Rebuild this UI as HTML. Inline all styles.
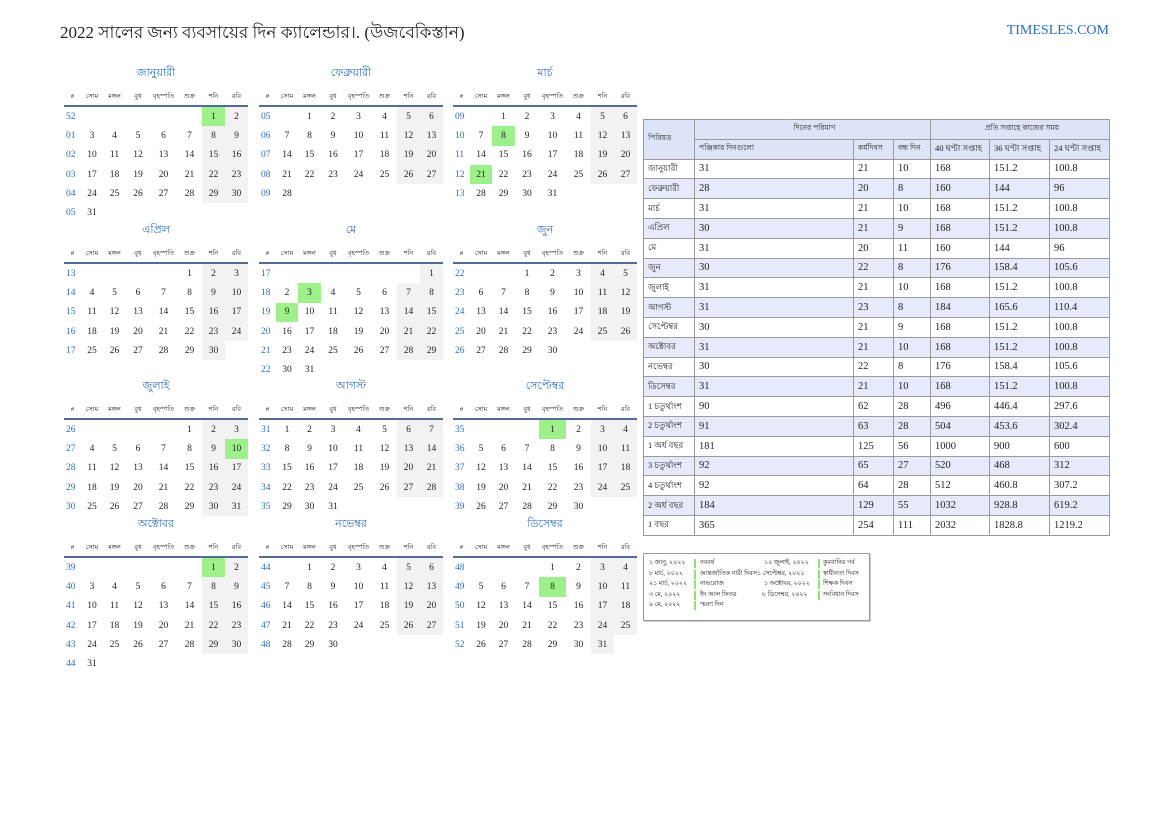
<!DOCTYPE html>
<html><head><meta charset="utf-8"><style>
body{margin:0;width:1169px;height:827px;background:#fff;position:relative;font-family:"Liberation Serif","DejaVu Serif",serif;color:#222;overflow:hidden}
.t{position:absolute;left:60px;top:20px;font-size:17px;white-space:nowrap}
.site{position:absolute;right:60px;top:23px;font-size:14px;color:#2a6ebb}
.m{position:absolute;width:184px}
.m h3{margin:0;height:22px;font-size:11px;font-weight:normal;color:#2a6ebb;text-align:center;line-height:16px}
table.c{border-collapse:collapse;width:184px;table-layout:fixed}
table.c th{font-size:6.5px;font-weight:normal;height:18px;border-bottom:2px solid #4f6d96;padding:0;text-align:center;white-space:nowrap;overflow:hidden}
table.c td{height:19.3px;padding:0;text-align:center;font-size:9.5px}
table.c td.w{color:#2a6ebb;text-align:left;padding-left:2px}
td.s{background:#f2f2f2}
td.g{background:#9ef08a}
table.r{position:absolute;left:643px;top:119px;border-collapse:collapse;table-layout:fixed;width:467px;font-size:10.5px}
table.r td{border:1px solid #9a9a9a;height:18.8px;padding:0 0 0 4px;white-space:nowrap;overflow:hidden}
table.r .h td{background:#dde4f7;font-size:7.5px;height:18.8px}
table.r .h td.cc{text-align:center}
table.r tr.b td{background:#e6eafa}
table.r td.p{font-size:8.5px}
.lg{position:absolute;left:643px;top:553px;width:225px;height:66px;border:1px solid #9a9a9a;box-shadow:1px 1px 0 #ccc;font-size:6.3px}
.lg div{position:absolute;white-space:nowrap;height:10px;line-height:10px}
.bar{position:absolute;width:2px;height:9px;background:#8fe07a}
</style></head><body>
<div class="t">2022 সালের জন্য ব্যবসায়ের দিন ক্যালেন্ডার।. (উজবেকিস্তান)</div>
<div class="site">TIMESLES.COM</div>

<div class="m" style="left:64px;top:65px"><h3>জানুয়ারী</h3><table class="c"><colgroup><col style="width:17px"><col style="width:22px"><col style="width:23px"><col style="width:24px"><col style="width:27px"><col style="width:25px"><col style="width:23px"><col style="width:23px"></colgroup>
<tr><th>#</th><th>সোম</th><th>মঙ্গল</th><th>বুধ</th><th>বৃহস্পতি</th><th>শুক্র</th><th>শনি</th><th>রবি</th></tr>
<tr><td class=w>52</td><td></td><td></td><td></td><td></td><td></td><td class=g>1</td><td class=s>2</td></tr>
<tr><td class=w>01</td><td>3</td><td>4</td><td>5</td><td>6</td><td>7</td><td class=s>8</td><td class=s>9</td></tr>
<tr><td class=w>02</td><td>10</td><td>11</td><td>12</td><td>13</td><td>14</td><td class=s>15</td><td class=s>16</td></tr>
<tr><td class=w>03</td><td>17</td><td>18</td><td>19</td><td>20</td><td>21</td><td class=s>22</td><td class=s>23</td></tr>
<tr><td class=w>04</td><td>24</td><td>25</td><td>26</td><td>27</td><td>28</td><td class=s>29</td><td class=s>30</td></tr>
<tr><td class=w>05</td><td>31</td><td></td><td></td><td></td><td></td><td></td><td></td></tr>
</table></div>

<div class="m" style="left:259px;top:65px"><h3>ফেব্রুয়ারী</h3><table class="c"><colgroup><col style="width:17px"><col style="width:22px"><col style="width:23px"><col style="width:24px"><col style="width:27px"><col style="width:25px"><col style="width:23px"><col style="width:23px"></colgroup>
<tr><th>#</th><th>সোম</th><th>মঙ্গল</th><th>বুধ</th><th>বৃহস্পতি</th><th>শুক্র</th><th>শনি</th><th>রবি</th></tr>
<tr><td class=w>05</td><td></td><td>1</td><td>2</td><td>3</td><td>4</td><td class=s>5</td><td class=s>6</td></tr>
<tr><td class=w>06</td><td>7</td><td>8</td><td>9</td><td>10</td><td>11</td><td class=s>12</td><td class=s>13</td></tr>
<tr><td class=w>07</td><td>14</td><td>15</td><td>16</td><td>17</td><td>18</td><td class=s>19</td><td class=s>20</td></tr>
<tr><td class=w>08</td><td>21</td><td>22</td><td>23</td><td>24</td><td>25</td><td class=s>26</td><td class=s>27</td></tr>
<tr><td class=w>09</td><td>28</td><td></td><td></td><td></td><td></td><td></td><td></td></tr>
</table></div>

<div class="m" style="left:453px;top:65px"><h3>মার্চ</h3><table class="c"><colgroup><col style="width:17px"><col style="width:22px"><col style="width:23px"><col style="width:24px"><col style="width:27px"><col style="width:25px"><col style="width:23px"><col style="width:23px"></colgroup>
<tr><th>#</th><th>সোম</th><th>মঙ্গল</th><th>বুধ</th><th>বৃহস্পতি</th><th>শুক্র</th><th>শনি</th><th>রবি</th></tr>
<tr><td class=w>09</td><td></td><td>1</td><td>2</td><td>3</td><td>4</td><td class=s>5</td><td class=s>6</td></tr>
<tr><td class=w>10</td><td>7</td><td class=g>8</td><td>9</td><td>10</td><td>11</td><td class=s>12</td><td class=s>13</td></tr>
<tr><td class=w>11</td><td>14</td><td>15</td><td>16</td><td>17</td><td>18</td><td class=s>19</td><td class=s>20</td></tr>
<tr><td class=w>12</td><td class=g>21</td><td>22</td><td>23</td><td>24</td><td>25</td><td class=s>26</td><td class=s>27</td></tr>
<tr><td class=w>13</td><td>28</td><td>29</td><td>30</td><td>31</td><td></td><td></td><td></td></tr>
</table></div>

<div class="m" style="left:64px;top:222px"><h3>এপ্রিল</h3><table class="c"><colgroup><col style="width:17px"><col style="width:22px"><col style="width:23px"><col style="width:24px"><col style="width:27px"><col style="width:25px"><col style="width:23px"><col style="width:23px"></colgroup>
<tr><th>#</th><th>সোম</th><th>মঙ্গল</th><th>বুধ</th><th>বৃহস্পতি</th><th>শুক্র</th><th>শনি</th><th>রবি</th></tr>
<tr><td class=w>13</td><td></td><td></td><td></td><td></td><td>1</td><td class=s>2</td><td class=s>3</td></tr>
<tr><td class=w>14</td><td>4</td><td>5</td><td>6</td><td>7</td><td>8</td><td class=s>9</td><td class=s>10</td></tr>
<tr><td class=w>15</td><td>11</td><td>12</td><td>13</td><td>14</td><td>15</td><td class=s>16</td><td class=s>17</td></tr>
<tr><td class=w>16</td><td>18</td><td>19</td><td>20</td><td>21</td><td>22</td><td class=s>23</td><td class=s>24</td></tr>
<tr><td class=w>17</td><td>25</td><td>26</td><td>27</td><td>28</td><td>29</td><td class=s>30</td><td></td></tr>
</table></div>

<div class="m" style="left:259px;top:222px"><h3>মে</h3><table class="c"><colgroup><col style="width:17px"><col style="width:22px"><col style="width:23px"><col style="width:24px"><col style="width:27px"><col style="width:25px"><col style="width:23px"><col style="width:23px"></colgroup>
<tr><th>#</th><th>সোম</th><th>মঙ্গল</th><th>বুধ</th><th>বৃহস্পতি</th><th>শুক্র</th><th>শনি</th><th>রবি</th></tr>
<tr><td class=w>17</td><td></td><td></td><td></td><td></td><td></td><td></td><td class=s>1</td></tr>
<tr><td class=w>18</td><td>2</td><td class=g>3</td><td>4</td><td>5</td><td>6</td><td class=s>7</td><td class=s>8</td></tr>
<tr><td class=w>19</td><td class=g>9</td><td>10</td><td>11</td><td>12</td><td>13</td><td class=s>14</td><td class=s>15</td></tr>
<tr><td class=w>20</td><td>16</td><td>17</td><td>18</td><td>19</td><td>20</td><td class=s>21</td><td class=s>22</td></tr>
<tr><td class=w>21</td><td>23</td><td>24</td><td>25</td><td>26</td><td>27</td><td class=s>28</td><td class=s>29</td></tr>
<tr><td class=w>22</td><td>30</td><td>31</td><td></td><td></td><td></td><td></td><td></td></tr>
</table></div>

<div class="m" style="left:453px;top:222px"><h3>জুন</h3><table class="c"><colgroup><col style="width:17px"><col style="width:22px"><col style="width:23px"><col style="width:24px"><col style="width:27px"><col style="width:25px"><col style="width:23px"><col style="width:23px"></colgroup>
<tr><th>#</th><th>সোম</th><th>মঙ্গল</th><th>বুধ</th><th>বৃহস্পতি</th><th>শুক্র</th><th>শনি</th><th>রবি</th></tr>
<tr><td class=w>22</td><td></td><td></td><td>1</td><td>2</td><td>3</td><td class=s>4</td><td class=s>5</td></tr>
<tr><td class=w>23</td><td>6</td><td>7</td><td>8</td><td>9</td><td>10</td><td class=s>11</td><td class=s>12</td></tr>
<tr><td class=w>24</td><td>13</td><td>14</td><td>15</td><td>16</td><td>17</td><td class=s>18</td><td class=s>19</td></tr>
<tr><td class=w>25</td><td>20</td><td>21</td><td>22</td><td>23</td><td>24</td><td class=s>25</td><td class=s>26</td></tr>
<tr><td class=w>26</td><td>27</td><td>28</td><td>29</td><td>30</td><td></td><td></td><td></td></tr>
</table></div>

<div class="m" style="left:64px;top:378px"><h3>জুলাই</h3><table class="c"><colgroup><col style="width:17px"><col style="width:22px"><col style="width:23px"><col style="width:24px"><col style="width:27px"><col style="width:25px"><col style="width:23px"><col style="width:23px"></colgroup>
<tr><th>#</th><th>সোম</th><th>মঙ্গল</th><th>বুধ</th><th>বৃহস্পতি</th><th>শুক্র</th><th>শনি</th><th>রবি</th></tr>
<tr><td class=w>26</td><td></td><td></td><td></td><td></td><td>1</td><td class=s>2</td><td class=s>3</td></tr>
<tr><td class=w>27</td><td>4</td><td>5</td><td>6</td><td>7</td><td>8</td><td class=s>9</td><td class=g>10</td></tr>
<tr><td class=w>28</td><td>11</td><td>12</td><td>13</td><td>14</td><td>15</td><td class=s>16</td><td class=s>17</td></tr>
<tr><td class=w>29</td><td>18</td><td>19</td><td>20</td><td>21</td><td>22</td><td class=s>23</td><td class=s>24</td></tr>
<tr><td class=w>30</td><td>25</td><td>26</td><td>27</td><td>28</td><td>29</td><td class=s>30</td><td class=s>31</td></tr>
</table></div>

<div class="m" style="left:259px;top:378px"><h3>আগস্ট</h3><table class="c"><colgroup><col style="width:17px"><col style="width:22px"><col style="width:23px"><col style="width:24px"><col style="width:27px"><col style="width:25px"><col style="width:23px"><col style="width:23px"></colgroup>
<tr><th>#</th><th>সোম</th><th>মঙ্গল</th><th>বুধ</th><th>বৃহস্পতি</th><th>শুক্র</th><th>শনি</th><th>রবি</th></tr>
<tr><td class=w>31</td><td>1</td><td>2</td><td>3</td><td>4</td><td>5</td><td class=s>6</td><td class=s>7</td></tr>
<tr><td class=w>32</td><td>8</td><td>9</td><td>10</td><td>11</td><td>12</td><td class=s>13</td><td class=s>14</td></tr>
<tr><td class=w>33</td><td>15</td><td>16</td><td>17</td><td>18</td><td>19</td><td class=s>20</td><td class=s>21</td></tr>
<tr><td class=w>34</td><td>22</td><td>23</td><td>24</td><td>25</td><td>26</td><td class=s>27</td><td class=s>28</td></tr>
<tr><td class=w>35</td><td>29</td><td>30</td><td>31</td><td></td><td></td><td></td><td></td></tr>
</table></div>

<div class="m" style="left:453px;top:378px"><h3>সেপ্টেম্বর</h3><table class="c"><colgroup><col style="width:17px"><col style="width:22px"><col style="width:23px"><col style="width:24px"><col style="width:27px"><col style="width:25px"><col style="width:23px"><col style="width:23px"></colgroup>
<tr><th>#</th><th>সোম</th><th>মঙ্গল</th><th>বুধ</th><th>বৃহস্পতি</th><th>শুক্র</th><th>শনি</th><th>রবি</th></tr>
<tr><td class=w>35</td><td></td><td></td><td></td><td class=g>1</td><td>2</td><td class=s>3</td><td class=s>4</td></tr>
<tr><td class=w>36</td><td>5</td><td>6</td><td>7</td><td>8</td><td>9</td><td class=s>10</td><td class=s>11</td></tr>
<tr><td class=w>37</td><td>12</td><td>13</td><td>14</td><td>15</td><td>16</td><td class=s>17</td><td class=s>18</td></tr>
<tr><td class=w>38</td><td>19</td><td>20</td><td>21</td><td>22</td><td>23</td><td class=s>24</td><td class=s>25</td></tr>
<tr><td class=w>39</td><td>26</td><td>27</td><td>28</td><td>29</td><td>30</td><td></td><td></td></tr>
</table></div>

<div class="m" style="left:64px;top:516px"><h3>অক্টোবর</h3><table class="c"><colgroup><col style="width:17px"><col style="width:22px"><col style="width:23px"><col style="width:24px"><col style="width:27px"><col style="width:25px"><col style="width:23px"><col style="width:23px"></colgroup>
<tr><th>#</th><th>সোম</th><th>মঙ্গল</th><th>বুধ</th><th>বৃহস্পতি</th><th>শুক্র</th><th>শনি</th><th>রবি</th></tr>
<tr><td class=w>39</td><td></td><td></td><td></td><td></td><td></td><td class=g>1</td><td class=s>2</td></tr>
<tr><td class=w>40</td><td>3</td><td>4</td><td>5</td><td>6</td><td>7</td><td class=s>8</td><td class=s>9</td></tr>
<tr><td class=w>41</td><td>10</td><td>11</td><td>12</td><td>13</td><td>14</td><td class=s>15</td><td class=s>16</td></tr>
<tr><td class=w>42</td><td>17</td><td>18</td><td>19</td><td>20</td><td>21</td><td class=s>22</td><td class=s>23</td></tr>
<tr><td class=w>43</td><td>24</td><td>25</td><td>26</td><td>27</td><td>28</td><td class=s>29</td><td class=s>30</td></tr>
<tr><td class=w>44</td><td>31</td><td></td><td></td><td></td><td></td><td></td><td></td></tr>
</table></div>

<div class="m" style="left:259px;top:516px"><h3>নভেম্বর</h3><table class="c"><colgroup><col style="width:17px"><col style="width:22px"><col style="width:23px"><col style="width:24px"><col style="width:27px"><col style="width:25px"><col style="width:23px"><col style="width:23px"></colgroup>
<tr><th>#</th><th>সোম</th><th>মঙ্গল</th><th>বুধ</th><th>বৃহস্পতি</th><th>শুক্র</th><th>শনি</th><th>রবি</th></tr>
<tr><td class=w>44</td><td></td><td>1</td><td>2</td><td>3</td><td>4</td><td class=s>5</td><td class=s>6</td></tr>
<tr><td class=w>45</td><td>7</td><td>8</td><td>9</td><td>10</td><td>11</td><td class=s>12</td><td class=s>13</td></tr>
<tr><td class=w>46</td><td>14</td><td>15</td><td>16</td><td>17</td><td>18</td><td class=s>19</td><td class=s>20</td></tr>
<tr><td class=w>47</td><td>21</td><td>22</td><td>23</td><td>24</td><td>25</td><td class=s>26</td><td class=s>27</td></tr>
<tr><td class=w>48</td><td>28</td><td>29</td><td>30</td><td></td><td></td><td></td><td></td></tr>
</table></div>

<div class="m" style="left:453px;top:516px"><h3>ডিসেম্বর</h3><table class="c"><colgroup><col style="width:17px"><col style="width:22px"><col style="width:23px"><col style="width:24px"><col style="width:27px"><col style="width:25px"><col style="width:23px"><col style="width:23px"></colgroup>
<tr><th>#</th><th>সোম</th><th>মঙ্গল</th><th>বুধ</th><th>বৃহস্পতি</th><th>শুক্র</th><th>শনি</th><th>রবি</th></tr>
<tr><td class=w>48</td><td></td><td></td><td></td><td>1</td><td>2</td><td class=s>3</td><td class=s>4</td></tr>
<tr><td class=w>49</td><td>5</td><td>6</td><td>7</td><td class=g>8</td><td>9</td><td class=s>10</td><td class=s>11</td></tr>
<tr><td class=w>50</td><td>12</td><td>13</td><td>14</td><td>15</td><td>16</td><td class=s>17</td><td class=s>18</td></tr>
<tr><td class=w>51</td><td>19</td><td>20</td><td>21</td><td>22</td><td>23</td><td class=s>24</td><td class=s>25</td></tr>
<tr><td class=w>52</td><td>26</td><td>27</td><td>28</td><td>29</td><td>30</td><td class=s>31</td><td></td></tr>
</table></div>

<table class="r">
<colgroup><col style="width:51px"><col style="width:159px"><col style="width:40px"><col style="width:37px"><col style="width:59px"><col style="width:60px"><col style="width:60px"></colgroup>
<tr class="h"><td rowspan="2">পিরিয়ড</td><td colspan="3" class="cc">দিনের পরিমাণ</td><td colspan="3" class="cc">প্রতি সপ্তাহে কাজের সময়</td></tr>
<tr class="h"><td>পঞ্জিকার দিনগুলো</td><td>কর্মদিবস</td><td>বন্ধ দিন</td><td style="font-size:8.5px">40 ঘণ্টা সপ্তাহ</td><td style="font-size:8.5px">36 ঘণ্টা সপ্তাহ</td><td style="font-size:8.5px">24 ঘণ্টা সপ্তাহ</td></tr>
<tr><td class=p>জানুয়ারী</td><td>31</td><td>21</td><td>10</td><td>168</td><td>151.2</td><td>100.8</td></tr>
<tr class=b><td class=p>ফেব্রুয়ারী</td><td>28</td><td>20</td><td>8</td><td>160</td><td>144</td><td>96</td></tr>
<tr><td class=p>মার্চ</td><td>31</td><td>21</td><td>10</td><td>168</td><td>151.2</td><td>100.8</td></tr>
<tr class=b><td class=p>এপ্রিল</td><td>30</td><td>21</td><td>9</td><td>168</td><td>151.2</td><td>100.8</td></tr>
<tr><td class=p>মে</td><td>31</td><td>20</td><td>11</td><td>160</td><td>144</td><td>96</td></tr>
<tr class=b><td class=p>জুন</td><td>30</td><td>22</td><td>8</td><td>176</td><td>158.4</td><td>105.6</td></tr>
<tr><td class=p>জুলাই</td><td>31</td><td>21</td><td>10</td><td>168</td><td>151.2</td><td>100.8</td></tr>
<tr class=b><td class=p>আগস্ট</td><td>31</td><td>23</td><td>8</td><td>184</td><td>165.6</td><td>110.4</td></tr>
<tr><td class=p>সেপ্টেম্বর</td><td>30</td><td>21</td><td>9</td><td>168</td><td>151.2</td><td>100.8</td></tr>
<tr class=b><td class=p>অক্টোবর</td><td>31</td><td>21</td><td>10</td><td>168</td><td>151.2</td><td>100.8</td></tr>
<tr><td class=p>নভেম্বর</td><td>30</td><td>22</td><td>8</td><td>176</td><td>158.4</td><td>105.6</td></tr>
<tr class=b><td class=p>ডিসেম্বর</td><td>31</td><td>21</td><td>10</td><td>168</td><td>151.2</td><td>100.8</td></tr>
<tr><td class=p>1 চতুর্থাংশ</td><td>90</td><td>62</td><td>28</td><td>496</td><td>446.4</td><td>297.6</td></tr>
<tr class=b><td class=p>2 চতুর্থাংশ</td><td>91</td><td>63</td><td>28</td><td>504</td><td>453.6</td><td>302.4</td></tr>
<tr><td class=p>1 অর্ধ বছর</td><td>181</td><td>125</td><td>56</td><td>1000</td><td>900</td><td>600</td></tr>
<tr class=b><td class=p>3 চতুর্থাংশ</td><td>92</td><td>65</td><td>27</td><td>520</td><td>468</td><td>312</td></tr>
<tr><td class=p>4 চতুর্থাংশ</td><td>92</td><td>64</td><td>28</td><td>512</td><td>460.8</td><td>307.2</td></tr>
<tr class=b><td class=p>2 অর্ধ বছর</td><td>184</td><td>129</td><td>55</td><td>1032</td><td>928.8</td><td>619.2</td></tr>
<tr><td class=p>1 বছর</td><td>365</td><td>254</td><td>111</td><td>2032</td><td>1828.8</td><td>1219.2</td></tr>
</table>

<div class="lg">
<div style="left:5px;top:4px">১ জানু, ২০২২</div><span class="bar" style="left:50px;top:5px"></span><div style="left:56px;top:4px">নববর্ষ</div>
<div style="left:5px;top:14.5px">৮ মার্চ, ২০২২</div><span class="bar" style="left:50px;top:15.5px"></span><div style="left:56px;top:14.5px">আন্তর্জাতিক নারী দিবস</div>
<div style="left:5px;top:25px">২১ মার্চ, ২০২২</div><span class="bar" style="left:50px;top:26px"></span><div style="left:56px;top:25px">নাভরোজ</div>
<div style="left:5px;top:35.5px">৩ মে, ২০২২</div><span class="bar" style="left:50px;top:36.5px"></span><div style="left:56px;top:35.5px">ইদ আল ফিতর</div>
<div style="left:5px;top:46px">৯ মে, ২০২২</div><span class="bar" style="left:50px;top:47px"></span><div style="left:56px;top:46px">স্মরণ দিন</div>
<div style="left:120px;top:4px">১০ জুলাই, ২০২২</div><span class="bar" style="left:174px;top:5px"></span><div style="left:179px;top:4px">কুরবানির পর্ব</div>
<div style="left:113px;top:14.5px">১ সেপ্টেম্বর, ২০২২</div><span class="bar" style="left:174px;top:15.5px"></span><div style="left:179px;top:14.5px">স্বাধীনতা দিবস</div>
<div style="left:120px;top:25px">১ অক্টোবর, ২০২২</div><span class="bar" style="left:174px;top:26px"></span><div style="left:179px;top:25px">শিক্ষক দিবস</div>
<div style="left:118px;top:35.5px">৮ ডিসেম্বর, ২০২২</div><span class="bar" style="left:174px;top:36.5px"></span><div style="left:179px;top:35.5px">সংবিধান দিবস</div>
</div>
</body></html>
